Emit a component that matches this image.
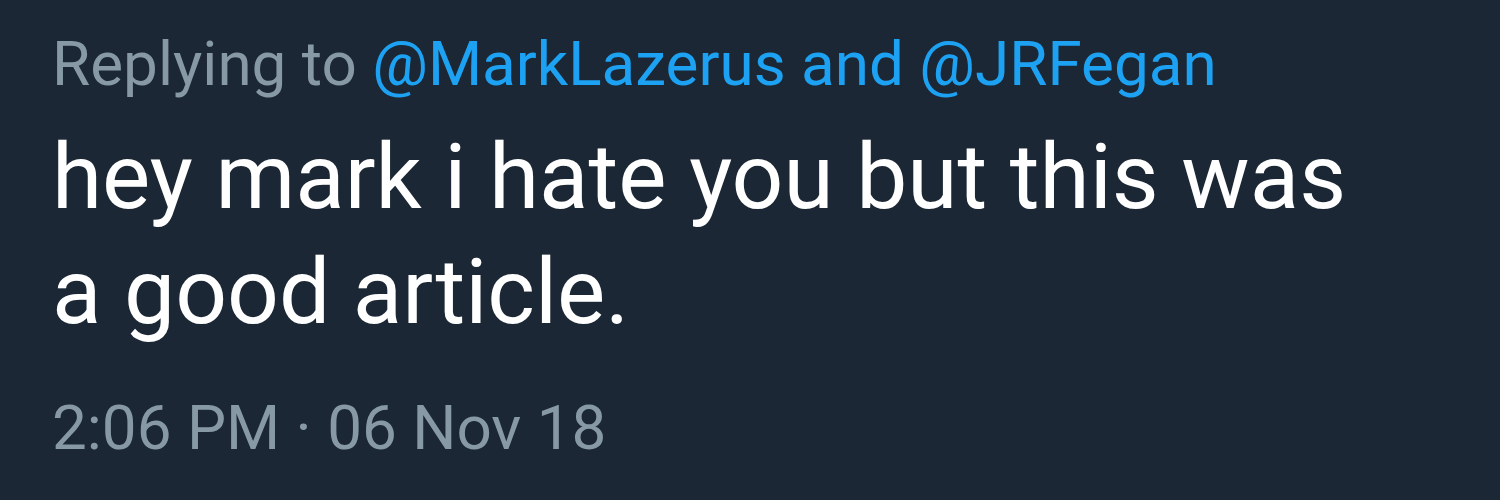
export default function App() {
  return (
    <div className="w-[1500px] h-[500px] bg-[#1b2734] overflow-hidden font-['Roboto',sans-serif] pl-[52px] pt-[26px]">
      <div className="text-[62px] leading-[76px] text-[#8899a6]">
        Replying to <span className="text-[#1da1f2]">@MarkLazerus</span>
        <span className="text-[#1da1f2]"> and </span>
        <span className="text-[#1da1f2]">@JRFegan</span>
      </div>
      <p className="mt-[18px] text-[91px] leading-[115px] text-white w-[1360px]">
        hey mark i hate you but this was a good article.
      </p>
      <div className="mt-[38px] text-[62px] leading-[80px] text-[#8899a6]">
        2:06 PM · 06 Nov 18
      </div>
    </div>
  )
}
